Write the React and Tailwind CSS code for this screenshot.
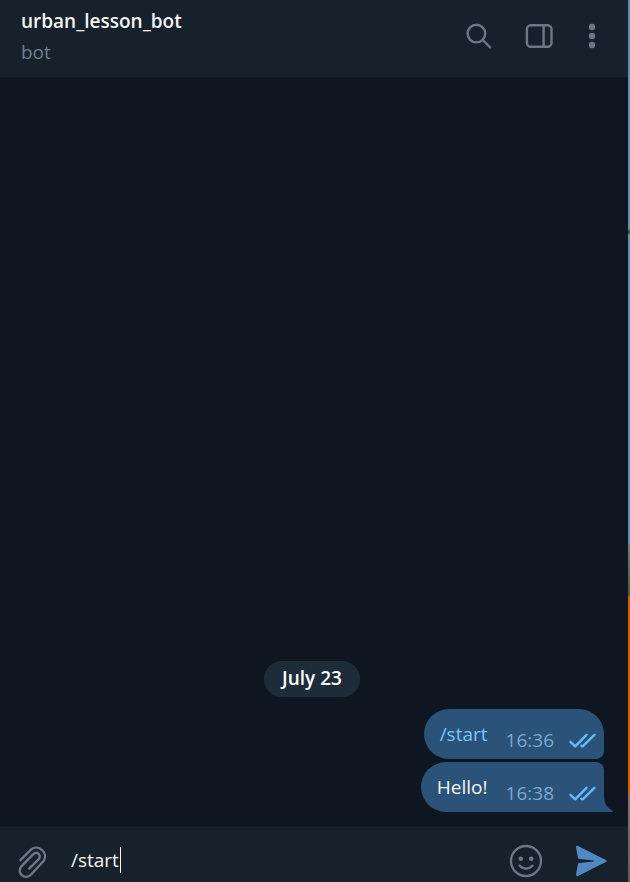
import { useState } from "react";

const messages = [
  { id: 1, text: "/start", time: "16:36", command: true, last: false },
  { id: 2, text: "Hello!", time: "16:38", command: false, last: true },
];

function SearchIcon() {
  return (
    <svg width="26" height="26" viewBox="0 0 26 26" fill="none" stroke="currentColor" strokeWidth="2.4" strokeLinecap="round">
      <circle cx="10.4" cy="10.6" r="8.8" />
      <path d="M16.800 17l7.300 7.300" />
    </svg>
  );
}

function PanelIcon() {
  return (
    <svg width="28" height="26" viewBox="0 0 28 26" fill="none" stroke="currentColor" strokeWidth="2.4">
      <rect x="1.9" y="2.2" width="24.600" height="21.600" rx="4" />
      <path d="M18.6 2.400v21.200" />
    </svg>
  );
}

function DotsIcon() {
  return (
    <svg width="8" height="26" viewBox="0 0 8 26" fill="currentColor">
      <circle cx="4" cy="4" r="3.2" />
      <circle cx="4" cy="13" r="3.2" />
      <circle cx="4" cy="22" r="3.2" />
    </svg>
  );
}

function ClipIcon() {
  return (
    <svg width="30" height="34" viewBox="0 0 30 34" fill="none" stroke="currentColor" strokeWidth="2.4" strokeLinecap="round" strokeLinejoin="round">
      <path d="M2.4 15.2L13.2 4.4C19.9-1.3 30.6 7.7 25.8 15.7L13.3 29.3C7.4 35.8-2.2 28.2 3.4 21.3L14.8 9.6C19.1 5.4 24.3 10.4 20.3 14.6L11.2 23.6" />
    </svg>
  );
}

function SmileIcon() {
  return (
    <svg width="34" height="34" viewBox="0 0 34 34" fill="none" stroke="currentColor" strokeWidth="2.3" strokeLinecap="round">
      <circle cx="17" cy="17" r="15" />
      <path d="M10.500 21.600c3.400 4 9.600 4 13 0" />
      <circle cx="11.800" cy="14.700" r="2.300" fill="currentColor" stroke="none" />
      <circle cx="22.200" cy="14.700" r="2.300" fill="currentColor" stroke="none" />
    </svg>
  );
}

function SendIcon() {
  return (
    <svg width="32" height="32" viewBox="0 0 32 32" fill="currentColor">
      <path d="M1 2.200C.9 1 2 .5 3 1L30.800 14.900c1.100.6 1.100 1.600 0 2.200L3 31c-1 .5-2.100 0-2-1.200L2.900 19.300c.2-.9.7-1.200 1.500-1.300L18.500 16.500c.7-.1.700-.9 0-1L4.400 14c-.8-.1-1.300-.4-1.500-1.300z" />
    </svg>
  );
}

function ReadIcon() {
  return (
    <svg width="27" height="15" viewBox="0 0 27 15" fill="none" stroke="currentColor" strokeWidth="2.4" strokeLinecap="round" strokeLinejoin="round" aria-label="Read">
      <path d="M1.500 8.800l4.700 4.600L17.500 1.800" />
      <path d="M12.400 12.800l1.300.6L25.400 1.800" />
    </svg>
  );
}

function Message({ text, time, command, last }) {
  return (
    <li
      className={
        "relative flex h-[50px] rounded-l-[25px] bg-[#2b5278] pl-4 pr-2 " +
        (last ? "rounded-tr-lg" : "rounded-tr-[25px] rounded-br-lg")
      }
    >
      {command ? (
        <a href="#start" className="mt-3 leading-[26px] text-[#79c4fc]">{text}</a>
      ) : (
        <p className="mt-3 leading-[26px] text-[#f5f5f5]">{text}</p>
      )}
      <time className="ml-[18px] mt-[18px] leading-[26px] text-[#7da8d3]">{time}</time>
      <span className="ml-[15px] mt-6 text-[#65b9fc]"><ReadIcon /></span>
      {last && (
        <svg className="absolute bottom-0 left-full text-[#2b5278]" width="9" height="17" viewBox="0 0 9 17" fill="currentColor">
          <path d="M0 0C0 8 3 12.500 8.500 15.800Q9.400 17 8 17H0z" />
        </svg>
      )}
    </li>
  );
}

export default function App() {
  const [draft, setDraft] = useState("/start");
  return (
    <div className="flex h-screen overflow-hidden bg-[#0e1621] font-['Open_Sans','Noto_Sans',sans-serif] text-[19px]">
      <div className="flex min-w-0 flex-1 flex-col">
        <header className="flex h-[78px] shrink-0 items-start justify-between border-b border-[#101a24] bg-[#17212b] pl-[21px] pr-8">
          <div className="pt-2">
            <h1 className="leading-[26px] font-semibold text-[#f5f5f5]">urban_lesson_bot</h1>
            <p className="mt-[5px] leading-[26px] text-[#6d7f8f]">bot</p>
          </div>
          <div className="flex pt-[23px] text-[#6c7883]">
            <button type="button" aria-label="Search"><SearchIcon /></button>
            <button type="button" aria-label="Toggle side panel" className="ml-[33px]"><PanelIcon /></button>
            <button type="button" aria-label="More options" className="ml-[35px]"><DotsIcon /></button>
          </div>
        </header>

        <main className="flex min-h-0 flex-1 flex-col justify-end pb-[14px] pl-5 pr-6">
          <div className="mb-3 self-center rounded-full bg-[#1e2c3a] px-[18px] pt-1 pb-1.5 leading-[26px] font-semibold text-white">
            July 23
          </div>
          <ul className="flex flex-col items-end gap-[3px]">
            {messages.map((m) => (
              <Message key={m.id} {...m} />
            ))}
          </ul>
        </main>

        <form
          onSubmit={(e) => e.preventDefault()}
          className="flex h-14 shrink-0 items-start overflow-hidden border-t border-[#131d28] bg-[#17212b] pl-[18px] pr-[21px] text-[#6c7883]"
        >
          <button type="button" aria-label="Attach file" className="mt-[18px]"><ClipIcon /></button>
          <label className="ml-[23px] mt-5 flex min-w-0 flex-1 items-center">
            <input
              type="text"
              aria-label="Message"
              value={draft}
              onChange={(e) => setDraft(e.target.value)}
              className="h-[26px] field-sizing-content bg-transparent pr-px text-[#f5f5f5] caret-transparent outline-none"
            />
            <span className="h-[26px] w-px bg-[#f5f5f5]" />
          </label>
          <button type="button" aria-label="Emoji" className="mt-[17px]"><SmileIcon /></button>
          <button type="submit" aria-label="Send" className="ml-8 mt-[18px] text-[#5288c1]"><SendIcon /></button>
        </form>
      </div>

      <div className="flex w-0.5 shrink-0 flex-col">
        <div className="h-[230px] bg-[#628fb0]" />
        <div className="h-1 bg-[#4b4643]" />
        <div className="h-[310px] bg-[#5d91ac]" />
        <div className="h-[52px] bg-linear-to-b from-[#6f817b] to-[#595535]" />
        <div className="h-[199px] bg-[#dc5c00]" />
        <div className="flex-1 bg-linear-to-b from-[#82747c] to-[#69575b]" />
      </div>
    </div>
  );
}
